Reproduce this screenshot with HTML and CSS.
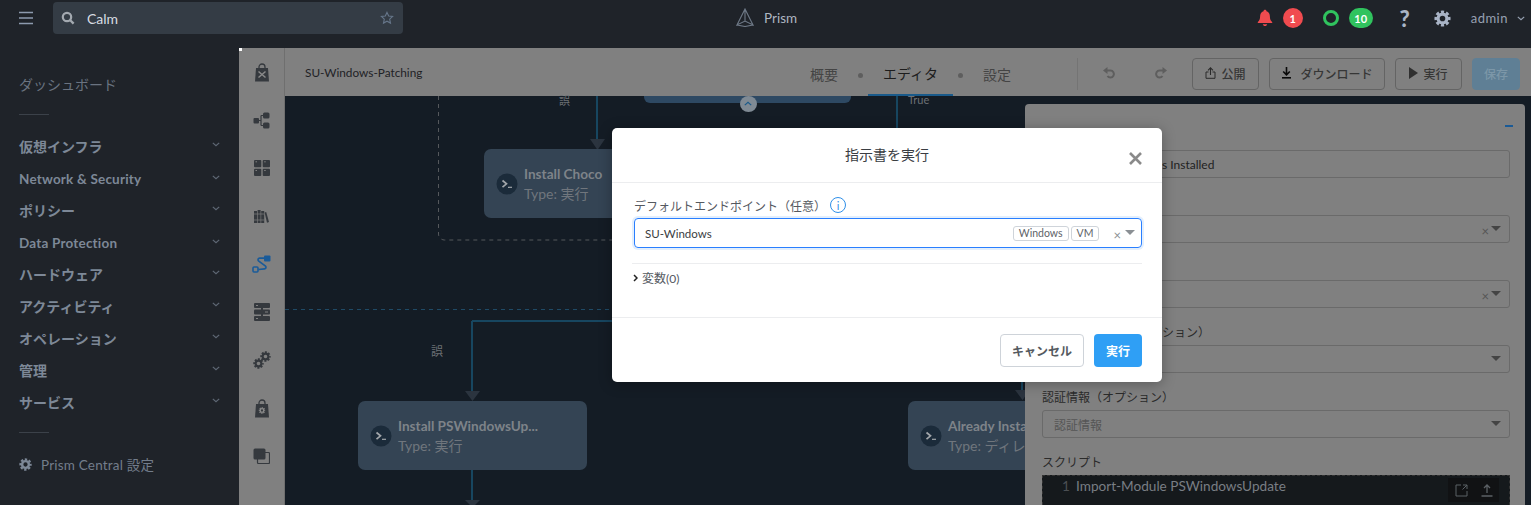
FILE: index.html
```html
<!DOCTYPE html>
<html lang="ja">
<head>
  <meta charset="UTF-8">
  <title>Prism - Calm</title>
  <link rel="stylesheet" href="styles.css">
</head>
<body>

  <svg class="defs" width="0" height="0">
    <symbol id="gear" viewBox="0 0 20 20">
      <circle cx="10" cy="10" r="5.2" fill="none" stroke="currentColor" stroke-width="3.8"/>
      <circle cx="10" cy="10" r="7.8" fill="none" stroke="currentColor" stroke-width="3.4" pathLength="32" stroke-dasharray="2.4 1.6" stroke-dashoffset="1.2"/>
    </symbol>
    <symbol id="chev" viewBox="0 0 10 6">
      <path d="M1 1l4 3.6L9 1" fill="none" stroke="currentColor" stroke-width="1.5"/>
    </symbol>
    <symbol id="term" viewBox="0 0 22 22">
      <circle cx="11" cy="11" r="10.5" fill="#1b2b3a"/>
      <path d="M6.5 7.5l4 3.3-4 3.3" fill="none" stroke="#a2a6aa" stroke-width="1.7"/>
      <path d="M12 14.3h4" stroke="#a2a6aa" stroke-width="1.2"/>
    </symbol>
  </svg>

  <header class="topbar">
    <div class="topbar-left">
      <svg class="burger" width="14" height="14" viewBox="0 0 14 14"><path d="M0 1.5h14M0 7h14M0 12.5h14" stroke="#8d9aae" stroke-width="1.5"/></svg>
      <div class="search">
        <svg width="14" height="14" viewBox="0 0 14 14"><circle cx="6" cy="6" r="4.2" fill="none" stroke="#a3a9b0" stroke-width="2.2"/><path d="M9 9l3.6 3.6" stroke="#a3a9b0" stroke-width="2.4"/></svg>
        <span class="search-text">Calm</span>
        <svg width="14" height="14" viewBox="0 0 14 14"><path d="M7 1.4l1.7 3.6 3.9.5-2.9 2.7.8 3.9L7 10.2l-3.5 1.9.8-3.9-2.9-2.7 3.9-.5z" fill="none" stroke="#66768a" stroke-width="1.1"/></svg>
      </div>
    </div>
    <div class="brand">
      <svg width="18" height="19" viewBox="0 0 18 19"><path d="M9 1L1 17l8-4 8 4zM9 1v12M1 17l8 1.5 8-1.5" fill="none" stroke="#6f7a88" stroke-width="1.1"/></svg>
      <span>Prism</span>
    </div>
    <div class="topbar-right">
      <svg class="bell" width="16" height="18" viewBox="0 0 16 18"><path d="M8 .8c.9 0 1.400.6 1.500 1.400 2.400.7 3.400 2.700 3.400 5.200 0 2.800.8 4.200 2.300 5.600v1H.8v-1c1.500-1.400 2.300-2.800 2.300-5.600 0-2.500 1-4.500 3.400-5.200C6.600 1.400 7.100.8 8 .8zM5.800 15.200h4.400C10 16.400 9.100 17 8 17s-2-.6-2.200-1.800z" fill="#f04b4f"/></svg>
      <span class="badge badge-red">1</span>
      <span class="ring"></span>
      <span class="badge badge-green">10</span>
      <span class="help">?</span>
      <svg class="top-gear" width="17" height="17"><use href="#gear"/></svg>
      <span class="user">admin</span>
      <svg class="user-chev" width="8" height="5"><use href="#chev"/></svg>
    </div>
  </header>

  <div class="layout">
    <aside class="sidenav">
      <a class="nav-plain">ダッシュボード</a>
      <div class="nav-sep"></div>
      <a class="nav-item">仮想インフラ<svg width="8" height="5"><use href="#chev"/></svg></a>
      <a class="nav-item nav-small">Network &amp; Security<svg width="8" height="5"><use href="#chev"/></svg></a>
      <a class="nav-item">ポリシー<svg width="8" height="5"><use href="#chev"/></svg></a>
      <a class="nav-item nav-small">Data Protection<svg width="8" height="5"><use href="#chev"/></svg></a>
      <a class="nav-item">ハードウェア<svg width="8" height="5"><use href="#chev"/></svg></a>
      <a class="nav-item">アクティビティ<svg width="8" height="5"><use href="#chev"/></svg></a>
      <a class="nav-item">オペレーション<svg width="8" height="5"><use href="#chev"/></svg></a>
      <a class="nav-item">管理<svg width="8" height="5"><use href="#chev"/></svg></a>
      <a class="nav-item">サービス<svg width="8" height="5"><use href="#chev"/></svg></a>
      <div class="nav-sep nav-sep-low"></div>
      <a class="nav-settings"><svg width="13" height="13"><use href="#gear"/></svg>Prism Central 設定</a>
    </aside>

    <main class="main">
      <span class="corner"></span>

      <nav class="rail">
        <svg width="16" height="19" viewBox="0 0 16 19"><path d="M5 6V4a3 3 0 0 1 6 0v2" fill="none" stroke="#35393e" stroke-width="1.3"/><path d="M2 5h12l1 13.500H1z" fill="#35393e"/><path d="M4.500 8.500l7 6M11.500 8.500l-7 6" stroke="#8a8a8a" stroke-width="1.500"/></svg>
        <svg width="17" height="17" viewBox="0 0 17 17"><g fill="#35393e"><rect x="0.500" y="6" width="5.500" height="5.500" rx="1"/><rect x="10" y="0.500" width="6.500" height="6" rx="1.500"/><rect x="10" y="10.500" width="6.500" height="6" rx="1.500"/></g><path d="M5 8.500h3M8 3.500v10M8 3.500h3M8 13.500h3" fill="none" stroke="#35393e" stroke-width="1.200"/></svg>
        <svg width="16" height="16" viewBox="0 0 16 16"><g fill="#35393e"><rect width="7.300" height="7.300" rx="1"/><rect x="8.700" width="7.300" height="7.300" rx="1"/><rect y="8.700" width="7.300" height="7.300" rx="1"/><rect x="8.700" y="8.700" width="7.300" height="7.300" rx="1"/></g><path d="M1.500 1.800h1.500M10.200 1.800h1.500M1.500 10.500h1.500M10.200 10.500h1.500" stroke="#808080"/></svg>
        <svg width="15" height="13" viewBox="0 0 15 13"><g fill="#35393e"><rect y="1" width="3" height="12"/><rect x="3.600" y="0" width="3" height="13"/><rect x="7.200" y="1" width="3" height="12"/><path d="M10.600 2.500l1.600-.6 2.800 10.100-2 .8z"/></g><path d="M0 4h10M0 10h10" stroke="#808080" stroke-width=".7"/></svg>
        <svg width="19" height="18" viewBox="0 0 19 18"><rect x="12" y="0.500" width="6.500" height="6" rx="1" fill="#1a5b99"/><rect x="1" y="12" width="5" height="5" rx="1" fill="none" stroke="#1a5b99" stroke-width="1.600"/><path d="M12 3.200H7.500a1.500 1.500 0 0 0-1 2.600l7 5.400a1.500 1.500 0 0 1-1 2.600l-6 .7" fill="none" stroke="#1a5b99" stroke-width="1.700"/></svg>
        <svg width="16" height="18" viewBox="0 0 16 18"><g fill="#35393e"><rect width="16" height="5" rx="1"/><rect y="6.500" width="16" height="5" rx="1"/><rect y="13" width="16" height="5" rx="1"/><rect x="7" y="4" width="2" height="10"/></g><path d="M2 2.500h2M11 9h3M2 15.500h2" stroke="#808080" stroke-width="1.200"/></svg>
        <svg width="18" height="18" viewBox="0 0 18 18"><use href="#gear" x="0" y="7" width="11" height="11"/><use href="#gear" x="7" y="0" width="11" height="11"/></svg>
        <svg width="16" height="19" viewBox="0 0 16 19"><path d="M5 6V4a3 3 0 0 1 6 0v2" fill="none" stroke="#35393e" stroke-width="1.300"/><path d="M2 5h12l1 13.500H1z" fill="#35393e"/><use href="#gear" x="4.500" y="8" width="7" height="7" color="#8a8a8a"/></svg>
        <svg width="17" height="16" viewBox="0 0 17 16"><rect x="4.500" y="4.500" width="12" height="11" rx="1" fill="none" stroke="#35393e" stroke-width="1.200"/><rect x="0.500" y="0.500" width="12" height="11" rx="1.500" fill="#35393e"/></svg>
      </nav>

      <div class="content">
        <div class="head">
          <span class="head-name">SU-Windows-Patching</span>
          <div class="tabs">
            <a class="tab">概要</a>
            <i class="tab-dot"></i>
            <a class="tab tab-active">エディタ</a>
            <i class="tab-dot tab-dot-right"></i>
            <a class="tab">設定</a>
          </div>
          <div class="actions">
            <svg class="hist" width="14" height="14" viewBox="0 0 14 14"><path d="M4 3.500h4.500a3.500 3.500 0 1 1-3 5.500" fill="none" stroke="#5e5e5e" stroke-width="2"/><path d="M5.500 0L1 3.500 5.500 7z" fill="#5e5e5e"/></svg>
            <svg class="hist hist-last" width="14" height="14" viewBox="0 0 14 14"><path d="M10 3.500H5.500a3.500 3.500 0 1 0 3 5.500" fill="none" stroke="#5e5e5e" stroke-width="2"/><path d="M8.500 0L13 3.500 8.500 7z" fill="#5e5e5e"/></svg>
            <button class="btn btn-publish"><svg width="11" height="12" viewBox="0 0 11 12"><path d="M3.500 5H1v6.300h9V5H7.500" fill="none" stroke="#2a2a2a"/><path d="M5.500 8V1M3 3.300L5.500.8 8 3.300" fill="none" stroke="#2a2a2a" stroke-width="1.100"/></svg>公開</button>
            <button class="btn btn-download"><svg width="11" height="12" viewBox="0 0 11 12"><path d="M5.500 0v7M2.200 4.500l3.300 3.300 3.300-3.300" fill="none" stroke="#0a0a0a" stroke-width="1.600"/><path d="M1 10.800h9" stroke="#0a0a0a" stroke-width="1.600"/></svg>ダウンロード</button>
            <button class="btn btn-run"><svg width="9" height="12" viewBox="0 0 9 12"><path d="M0 0l9 6-9 6z" fill="#2f2f2f"/></svg>実行</button>
            <button class="btn btn-save">保存</button>
          </div>
        </div>

        <div class="canvas">
          <svg class="wires" width="1246" height="409">
            <path d="M153.500 0v138a6 6 0 0 0 6 6H340" fill="none" stroke="#55585c" stroke-dasharray="4 4"/>
            <path d="M0 213.500h330" stroke="#1f4a66" stroke-dasharray="4 4"/>
            <path d="M312 0v44M612 0v32M187 225h160M187 225v70M187 374v30M737 280v16" fill="none" stroke="#174660" stroke-width="2"/>
            <path d="M305 43h15l-7.500 11zM180 295h15l-7.500 10zM180 404h15l-5 5h-5zM730 294h15l-7.500 10z" fill="#2b343f"/>
          </svg>

          <span class="wire-label label-a">誤</span>
          <span class="wire-label label-b">True</span>
          <span class="wire-label label-c">誤</span>

          <div class="node-tail"></div>
          <span class="collapse"><svg width="8" height="5"><use href="#chev"/></svg></span>

          <div class="node node-choco">
            <svg width="22" height="22"><use href="#term"/></svg>
            <div><div class="node-title">Install Choco</div><div class="node-type">Type: 実行</div></div>
          </div>
          <div class="node node-update">
            <svg width="22" height="22"><use href="#term"/></svg>
            <div><div class="node-title">Install PSWindowsUp...</div><div class="node-type">Type: 実行</div></div>
          </div>
          <div class="node node-already">
            <svg width="22" height="22"><use href="#term"/></svg>
            <div><div class="node-title">Already Installed</div><div class="node-type">Type: ディレイ</div></div>
          </div>

          <section class="panel">
            <span class="panel-min"></span>
            <div class="field">
              <label>タスク名</label>
              <div class="control control-text">PSWindowsUpdate is Installed</div>
            </div>
            <div class="field">
              <label>タイプ</label>
              <div class="control control-select"><span class="clear">×</span><i class="arrow"></i></div>
            </div>
            <div class="field">
              <label>スクリプトタイプ</label>
              <div class="control control-select"><span class="clear">×</span><i class="arrow"></i></div>
            </div>
            <div class="field">
              <label>エンドポイント&#xFF08;オプション&#xFF09;</label>
              <div class="control control-select"><i class="arrow"></i></div>
            </div>
            <div class="field">
              <label>認証情報&#xFF08;オプション&#xFF09;</label>
              <div class="control control-select"><span class="placeholder">認証情報</span><i class="arrow"></i></div>
            </div>
            <div class="field">
              <label>スクリプト</label>
              <div class="code">
                <span class="code-line">1</span>
                <span class="code-text">Import-Module PSWindowsUpdate</span>
                <div class="code-tools">
                  <svg width="13" height="13" viewBox="0 0 13 13"><path d="M6 1H1v11h11V7M7.500 5.500L12 1M8 1h4v4" fill="none" stroke="#5b6065"/></svg>
                  <svg width="12" height="13" viewBox="0 0 12 13"><path d="M6 9V1.500M3 4l3-3 3 3" fill="none" stroke="#5b6065" stroke-width="1.300"/><path d="M.500 12h11" stroke="#5b6065" stroke-width="1.500"/></svg>
                </div>
              </div>
            </div>
          </section>
        </div>
      </div>

      <div class="modal">
        <div class="modal-head">
          <h2>指示書を実行</h2>
          <svg class="modal-close" width="13" height="13" viewBox="0 0 13 13"><path d="M1 1l11 11M12 1L1 12" stroke="#8a8a8a" stroke-width="2.600"/></svg>
        </div>
        <div class="modal-body">
          <div class="modal-label">デフォルトエンドポイント&#xFF08;任意&#xFF09;<span class="info">i</span></div>
          <div class="picker">
            <span class="picker-value">SU-Windows</span>
            <span class="tag">Windows</span>
            <span class="tag">VM</span>
            <span class="clear">×</span>
            <i class="arrow"></i>
          </div>
          <div class="vars">
            <svg width="5" height="8" viewBox="0 0 5 8"><path d="M1 1l3 3-3 3" fill="none" stroke="#222" stroke-width="1.500"/></svg>
            変数(0)
          </div>
        </div>
        <div class="modal-foot">
          <button class="btn-cancel">キャンセル</button>
          <button class="btn-exec">実行</button>
        </div>
      </div>
    </main>
  </div>

</body>
</html>
```

FILE: styles.css
```css
* {
  box-sizing: border-box;
}

html, body {
  height: 505px;
  overflow: hidden;
}

body {
  margin: 0;
  background: #1f2329;
  font-family: Lato, "Noto Sans CJK JP", sans-serif;
  color: #333;
}

.defs {
  position: absolute;
}

/* top bar */
.topbar {
  display: flex;
  align-items: flex-start;
  justify-content: space-between;
  height: 48px;
  background: #1f2329;
}

.topbar-left {
  display: flex;
  align-items: center;
  width: 403px;
  height: 36px;
  padding-left: 19px;
}

.burger {
  flex: none;
  margin-right: 20px;
}

.search {
  display: flex;
  align-items: center;
  flex: 1;
  height: 32px;
  padding: 0 9px 0 8px;
  background: #343c45;
  border-radius: 4px;
}

.search-text {
  flex: 1;
  margin-left: 12px;
  font-size: 14px;
  color: #d8dde3;
}

.brand {
  display: flex;
  align-items: center;
  gap: 10px;
  position: absolute;
  left: 736px;
  top: 8px;
  font-size: 13.500px;
  color: #aeb6c2;
}

.topbar-right {
  display: flex;
  align-items: center;
  height: 36px;
  padding-right: 6px;
}

.bell {
  margin-right: 10px;
}

.badge {
  display: flex;
  align-items: center;
  justify-content: center;
  height: 20px;
  border-radius: 10px;
  font-size: 11px;
  font-weight: 700;
  color: #fff;
}

.badge-red {
  width: 20px;
  background: #f04b4f;
}

.badge-green {
  width: 24px;
  background: #30c35e;
}

.ring {
  width: 16px;
  height: 16px;
  margin: 0 10px 0 20px;
  border: 3.500px solid #30c35e;
  border-radius: 50%;
}

.help {
  width: 14px;
  margin: 0 22px 0 25px;
  font-size: 22px;
  font-weight: 900;
  text-align: center;
  color: #a9b4c6;
}

.top-gear {
  margin-right: 20px;
  color: #a9b4c6;
}

.user {
  font-size: 13px;
  letter-spacing: 0.5px;
  color: #97a1b2;
}

.user-chev {
  margin-left: 9px;
  color: #97a1b2;
}

/* left nav */
.layout {
  display: flex;
  height: 457px;
}

.sidenav {
  flex: none;
  width: 239px;
  padding: 20px 19px 0;
  background: #1f2329;
}

.nav-plain, .nav-item, .nav-settings {
  display: flex;
  align-items: center;
  height: 32px;
  color: #7d8897;
}

.nav-plain {
  font-size: 14px;
  color: #6a7380;
}

.nav-sep {
  width: 30px;
  height: 1px;
  margin: 14px 0 15px;
  background: #3b4149;
}

.nav-sep-low {
  margin: 14px 0 15px;
}

.nav-item {
  justify-content: space-between;
  font-size: 14px;
  font-weight: 700;
}

.nav-item svg {
  flex: none;
  margin: -3px 0 0;
  color: #5f6875;
}

.nav-small {
  padding-top: 1px;
  font-size: 13.500px;
  letter-spacing: 0.2px;
}

.nav-settings {
  gap: 9px;
  font-size: 13.500px;
  letter-spacing: 0.2px;
  color: #737d8b;
}

.nav-settings svg {
  color: #7d8897;
}

/* main area, dimmed behind the dialog */
.main {
  display: flex;
  position: relative;
  flex: 1;
  min-width: 0;
}

.corner {
  position: absolute;
  left: 0;
  top: 0;
  width: 3px;
  height: 3px;
  background: #fff;
}

.rail {
  display: grid;
  grid-auto-rows: 48px;
  place-items: center;
  flex: none;
  width: 46px;
  background: #808080;
  border-right: 1px solid #6f6f6f;
  color: #35393e;
}

.content {
  display: flex;
  flex-direction: column;
  flex: 1;
  min-width: 0;
}

.head {
  display: flex;
  align-items: center;
  flex: none;
  height: 48px;
  padding-left: 20px;
  background: #808080;
}

.head-name {
  width: 505px;
  flex: none;
  font-size: 11.800px;
  color: #1f2226;
}

.tabs {
  display: flex;
  align-items: center;
  flex: none;
  height: 48px;
}

.tab {
  display: flex;
  align-items: center;
  height: 48px;
  padding-top: 3px;
  font-size: 14px;
  white-space: nowrap;
  color: #444;
}

.tab-active {
  width: 85px;
  justify-content: center;
  color: #1d1d1d;
  border-bottom: 2px solid #1a5a8a;
}

.tab-dot {
  width: 5px;
  height: 5px;
  margin: 7px 5px 0 20px;
  background: #5e5e5e;
  border-radius: 50%;
}

.tab-dot-right {
  margin: 7px 20px 0 5px;
}

.actions {
  display: flex;
  align-items: center;
  flex: none;
  height: 32px;
  margin: 3px 0 0 66px;
  padding-left: 24px;
  border-left: 1px solid #747474;
}

.hist {
  margin-right: 38px;
}

.hist-last {
  margin-right: 24px;
}

.btn {
  display: flex;
  align-items: center;
  justify-content: center;
  gap: 5px;
  height: 32px;
  margin-right: 10px;
  padding: 0 0 1px;
  background: transparent;
  border: 1px solid #646464;
  border-radius: 4px;
  font-family: inherit;
  font-size: 12px;
  font-weight: 500;
  color: #363636;
}

.btn-publish {
  width: 67px;
}

.btn-download {
  width: 116px;
  gap: 8px;
}

.btn-run {
  width: 67px;
}

.btn-save {
  width: 48px;
  background: #5f7f95;
  border-color: #5f7f95;
  color: #7c97a8;
}

/* flow canvas */
.canvas {
  position: relative;
  flex: 1;
  background: #141c25;
}

.wires {
  position: absolute;
  left: 0;
  top: 0;
}

.wire-label {
  position: absolute;
  font-size: 11px;
  line-height: 9px;
  color: #6d7175;
}

.label-a {
  left: 274px;
  top: 0;
}

.label-b {
  left: 623px;
  top: -1px;
}

.label-c {
  left: 146px;
  top: 251px;
  font-size: 12px;
}

.node-tail {
  position: absolute;
  left: 359px;
  top: 0;
  width: 207px;
  height: 7px;
  background: #2e4963;
  border-radius: 0 0 6px 6px;
}

.collapse {
  display: flex;
  align-items: center;
  justify-content: center;
  position: absolute;
  left: 455px;
  top: 0;
  width: 17px;
  height: 16px;
  background: #7f8a94;
  border-radius: 50%;
  color: #1a5a8a;
  transform: rotate(180deg);
}

.node {
  display: flex;
  align-items: center;
  gap: 6px;
  position: absolute;
  width: 229px;
  height: 69px;
  padding-left: 12px;
  background: #344454;
  border-radius: 7px;
}

.node-choco {
  left: 199px;
  top: 53px;
}

.node-update {
  left: 73px;
  top: 305px;
}

.node-already {
  left: 623px;
  top: 305px;
}

.node-title {
  font-size: 13.600px;
  font-weight: 700;
  line-height: 20px;
  color: #7e8389;
}

.node-type {
  font-size: 14px;
  line-height: 20px;
  color: #70767d;
}

/* right hand task panel */
.panel {
  display: flex;
  flex-direction: column;
  gap: 8px;
  position: absolute;
  left: 740px;
  top: 8px;
  width: 500px;
  height: 401px;
  padding: 28px 15px 0 17px;
  background: #808080;
  border-radius: 4px 4px 0 0;
}

.panel-min {
  position: absolute;
  right: 12px;
  top: 21px;
  width: 8px;
  height: 2px;
  background: #1a5a96;
}

.field {
  display: flex;
  flex-direction: column;
  flex: none;
  height: 57px;
}

.field label {
  flex: none;
  height: 29px;
  padding-top: 9px;
  font-size: 12px;
  line-height: 16px;
  color: #2b2b2b;
}

.field:first-of-type {
  margin-top: -11px;
}

.control {
  display: flex;
  align-items: center;
  justify-content: flex-end;
  flex: none;
  height: 28px;
  padding: 0 8px 0 11px;
  border: 1px solid #6a6a6a;
  border-radius: 3px;
  font-size: 11px;
  color: #222;
}

.control-text {
  justify-content: flex-start;
  font-size: 12px;
}

.placeholder {
  flex: 1;
  font-size: 12px;
  color: #555;
}

.clear {
  margin: 4px 2px 0 0;
  font-size: 13px;
  line-height: 1;
  color: #555;
}

.arrow {
  width: 0;
  height: 0;
  margin-top: -2px;
  border-left: 5px solid transparent;
  border-right: 5px solid transparent;
  border-top: 5px solid #444;
}

.code {
  display: flex;
  align-items: flex-start;
  position: relative;
  flex: none;
  height: 30px;
  padding: 2px 0 0 19px;
  background: #15191c;
  border: 1px dashed #333;
  border-bottom: none;
  font-size: 13.600px;
  color: #797e84;
}

.code-line {
  width: 14px;
  color: #4b4f53;
}

.code-tools {
  display: flex;
  align-items: center;
  gap: 13px;
  position: absolute;
  right: 10px;
  top: 2px;
  height: 24px;
  padding: 0 6px 0 7px;
  background: #111214;
}

/* dialog */
.modal {
  position: absolute;
  left: 373px;
  top: 80px;
  width: 550px;
  height: 254px;
  background: #fff;
  border-radius: 5px;
  box-shadow: 0 2px 14px rgba(0, 0, 0, 0.3);
}

.modal-head {
  display: flex;
  align-items: center;
  justify-content: center;
  position: relative;
  height: 55px;
  padding-bottom: 2px;
  border-bottom: 1px solid #ecedef;
}

.modal-head h2 {
  margin: 0;
  font-size: 14px;
  font-weight: 400;
  color: #3a3d42;
}

.modal-close {
  position: absolute;
  right: 20px;
  top: 24px;
}

.modal-body {
  height: 135px;
  padding: 13px 20px 0 22px;
  border-bottom: 1px solid #ecedef;
}

.modal-label {
  display: flex;
  align-items: center;
  height: 18px;
  font-size: 12px;
  color: #55595f;
}

.info {
  display: flex;
  align-items: center;
  justify-content: center;
  width: 16px;
  height: 16px;
  margin-left: 4px;
  border: 1px solid #2f8fe8;
  border-radius: 50%;
  font-size: 11px;
  color: #2f8fe8;
}

.picker {
  display: flex;
  align-items: center;
  gap: 2px;
  height: 30px;
  margin-top: 4px;
  padding: 0 6px 0 10px;
  border: 1px solid #2a7fff;
  border-radius: 4px;
  box-shadow: 0 0 0 2px #e3effd;
  font-size: 11.500px;
  color: #3a3d42;
}

.picker-value {
  flex: 1;
}

.tag {
  height: 15px;
  padding: 0 5px;
  border: 1px solid #cfd4da;
  border-radius: 3px;
  font-size: 10.500px;
  line-height: 13px;
  color: #5e6368;
}

.picker .clear {
  margin: 4px 2px 0 12px;
  color: #8a8f94;
}

.picker .arrow {
  border-top-color: #8a8f94;
}

.vars {
  display: flex;
  align-items: center;
  gap: 4px;
  height: 28px;
  margin: 15px 0 0 -2px;
  padding-left: 1px;
  border-top: 1px solid #ecedef;
  font-size: 12px;
  color: #55595f;
}

.modal-foot {
  display: flex;
  justify-content: flex-end;
  gap: 10px;
  padding: 16px 20px 0 0;
}

.btn-cancel, .btn-exec {
  height: 33px;
  border-radius: 4px;
  font-family: inherit;
  font-size: 12px;
  font-weight: 700;
}

.btn-cancel {
  width: 84px;
  background: #fff;
  border: 1px solid #ced3d9;
  color: #555a60;
}

.btn-exec {
  width: 48px;
  background: #2f9ff5;
  border: none;
  color: #fff;
}
```
